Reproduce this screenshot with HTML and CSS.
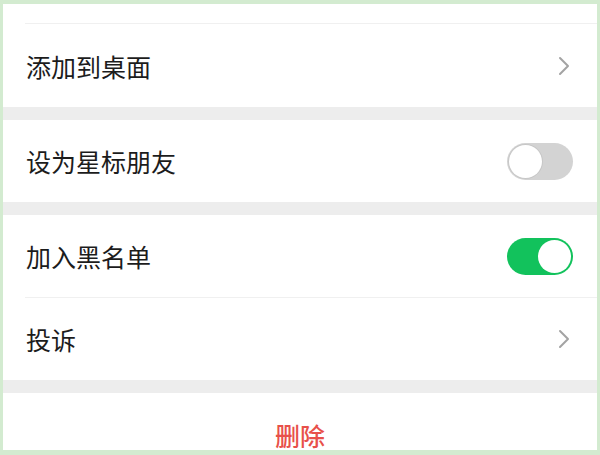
FILE: index.html
```html
<!DOCTYPE html>
<html lang="zh-CN">
<head>
  <meta charset="UTF-8" />
  <meta name="viewport" content="width=device-width, initial-scale=1.0"/>
  <title>资料设置</title>
  <link rel="stylesheet" href="styles.css">
</head>
<body>
  <div class="screen">
    <div class="group">
      <div class="row row-top"></div>
      <div class="row">
        <span class="label">添加到桌面</span>
        <svg class="chevron" width="12" height="20" viewBox="0 0 12 20">
          <path d="M2 2 L10 10 L2 18" fill="none" stroke="#a3a3a3" stroke-width="2" stroke-linecap="round" stroke-linejoin="round"/>
        </svg>
      </div>
    </div>

    <div class="group">
      <div class="row">
        <span class="label">设为星标朋友</span>
        <span class="switch"></span>
      </div>
    </div>

    <div class="group">
      <div class="row">
        <span class="label">加入黑名单</span>
        <span class="switch on"></span>
      </div>
      <div class="row">
        <span class="label">投诉</span>
        <svg class="chevron" width="12" height="20" viewBox="0 0 12 20">
          <path d="M2 2 L10 10 L2 18" fill="none" stroke="#a3a3a3" stroke-width="2" stroke-linecap="round" stroke-linejoin="round"/>
        </svg>
      </div>
    </div>

    <div class="group">
      <div class="row danger">删除</div>
    </div>
  </div>
</body>
</html>
```

FILE: styles.css
```css
body {
  margin: 0;
  padding: 4px 3px 5px 3px;
  background: #d3ebd0;
  font-family: "Noto Sans CJK SC", "Noto Sans", sans-serif;
}

.screen {
  height: 446px;
  overflow: hidden;
  background: #ededed;
}

.group {
  background: white;
  margin-bottom: 13px;
}

.row {
  display: flex;
  align-items: center;
  justify-content: space-between;
  height: 82px;
  padding: 0 24px 0 1px;
  margin-left: 22px;
  border-top: 1px solid #f0f0f0;
  color: #1c1c1c;
  font-size: 25px;
}

.group .row:first-child {
  border-top: none;
}

.row-top {
  height: 19px;
  border-bottom: 1px solid #f0f0f0;
}

.group .row-top + .row {
  border-top: none;
  height: 83px;
}

.chevron {
  margin-right: 3px;
}

.switch {
  position: relative;
  width: 66px;
  height: 37px;
  border-radius: 19px;
  background: #d3d3d3;
}

.switch::after {
  content: "";
  position: absolute;
  top: 2px;
  left: 2px;
  width: 33px;
  height: 33px;
  border-radius: 50%;
  background: white;
  box-shadow: 0 0 0 1px rgba(0, 0, 0, 0.06);
}

.switch.on {
  background: #12c25c;
}

.switch.on::after {
  left: 31px;
  box-shadow: none;
}

.danger {
  justify-content: center;
  margin-left: 0;
  padding: 0;
  height: 83px;
  color: #e8504a;
  font-weight: 500;
}
```
